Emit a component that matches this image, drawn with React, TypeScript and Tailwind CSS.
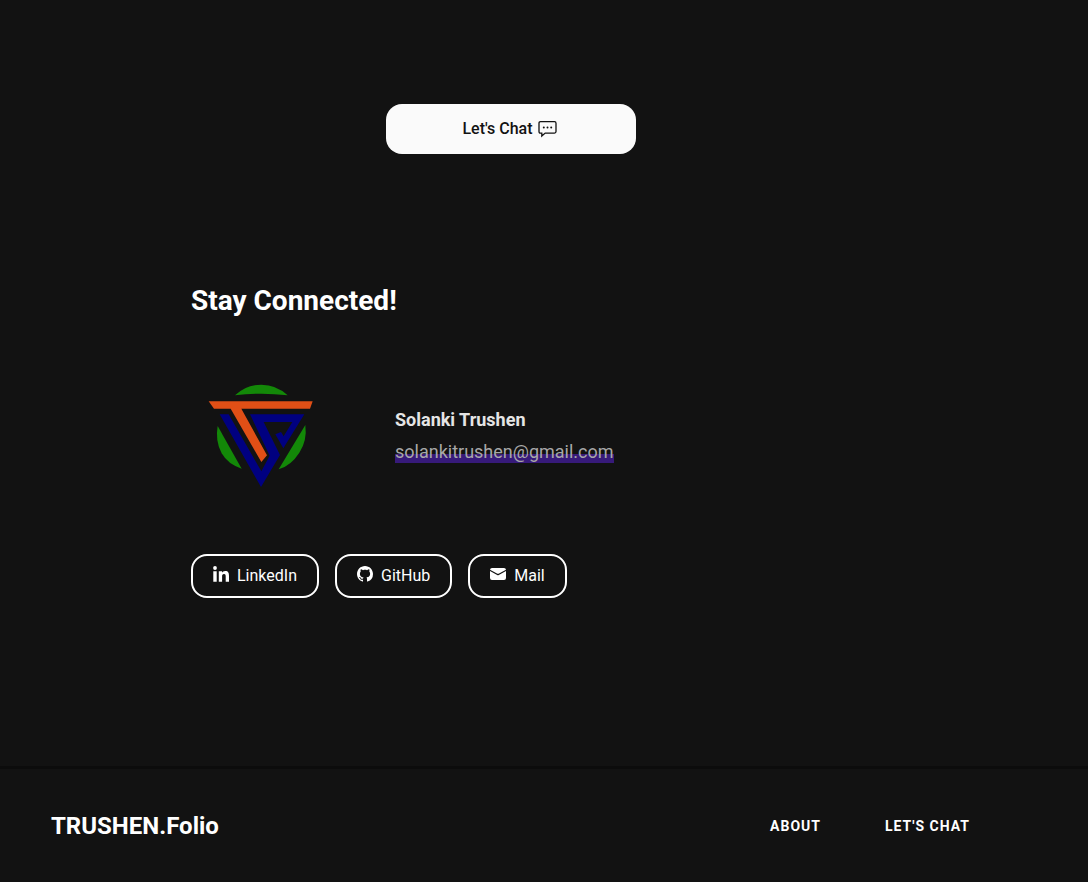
function LinkedInMark() {
  return (
    <svg viewBox="0 0 16 16" className="mb-1 size-4" fill="currentColor" aria-hidden="true">
      <circle cx="2" cy="2" r="1.9" />
      <path d="M.3 5.3H3.7V15.7H.3ZM5.8 5.3H9V6.7C9.5 5.8 10.6 5 12.2 5C15.4 5 16 7.1 16 9.9V15.7H12.7V10.5C12.7 9.2 12.6 7.9 11 7.9C9.4 7.9 9.1 9.1 9.1 10.5V15.7H5.8Z" />
    </svg>
  );
}

function GitHubMark() {
  return (
    <svg viewBox="0 0 16 16" className="mb-1 size-4" fill="currentColor" aria-hidden="true">
      <path d="M8 0C3.58 0 0 3.58 0 8c0 3.54 2.29 6.53 5.47 7.59.4.07.55-.17.55-.38 0-.19-.01-.82-.01-1.49-2.01.37-2.53-.49-2.69-.94-.09-.23-.48-.94-.82-1.13-.28-.15-.68-.52-.01-.53.63-.01 1.08.58 1.23.82.72 1.21 1.87.87 2.33.66.07-.52.28-.87.51-1.07-1.78-.2-3.64-.89-3.64-3.95 0-.87.31-1.59.82-2.15-.08-.2-.36-1.02.08-2.12 0 0 .67-.21 2.2.82.64-.18 1.32-.27 2-.27s1.36.09 2 .27c1.53-1.04 2.2-.82 2.2-.82.44 1.1.16 1.92.08 2.12.51.56.82 1.27.82 2.15 0 3.07-1.87 3.75-3.65 3.95.29.25.54.73.54 1.48 0 1.07-.01 1.93-.01 2.2 0 .21.15.46.55.38A8.01 8.01 0 0 0 16 8c0-4.42-3.58-8-8-8Z" />
    </svg>
  );
}

function MailMark() {
  return (
    <svg viewBox="0 0 16 16" className="mb-1 size-4" fill="currentColor" aria-hidden="true">
      <path d="M2 2H14Q15.8 2 16 3.7L8.6 7.7Q8 8 7.4 7.7L0 3.7Q.2 2 2 2Z" />
      <path d="M0 5L7.2 9Q8 9.4 8.8 9L16 5V12Q16 14 14 14H2Q0 14 0 12Z" />
    </svg>
  );
}

const socials = [
  { label: "LinkedIn", href: "#linkedin", Icon: LinkedInMark },
  { label: "GitHub", href: "#github", Icon: GitHubMark },
  { label: "Mail", href: "mailto:solankitrushen@gmail.com", Icon: MailMark },
];

function Logo() {
  return (
    <svg viewBox="0 0 375 360" className="h-[120px] w-[125px]" role="img" aria-label="Trushen logo">
      <g fill="#138808">
        <path d="M105 61Q138 29 184 29T263 61Q184 51 105 61Z" />
        <path d="M53 153Q45 198 65 235Q84 268 125 281Z" />
        <path d="M316 150Q322 197 298 233Q273 272 236 283Z" />
      </g>
      <path fill="#000080" d="M59 118H86L184 289L209 242L150 118H313L250 220L226 178L243 171L251 184L277 141H191L240 240L183 336Z" />
      <path fill="#e04f16" d="M26 79H338L330 101H124L201 241L184 261L92 101H42Z" />
    </svg>
  );
}

function ChatIcon() {
  return (
    <svg viewBox="0 0 20 18" className="h-[18px] w-5" fill="none" stroke="currentColor" strokeWidth="1.3" aria-hidden="true">
      <path d="M2.5 1.7H16.5Q18 1.7 18 3.2V11.6Q18 13.1 16.5 13.1H7.2L3.8 16V13.1H2.5Q1 13.1 1 11.6V3.2Q1 1.7 2.5 1.7Z" />
      <g fill="currentColor" stroke="none">
        <circle cx="5.8" cy="7.4" r="1" />
        <circle cx="9.5" cy="7.4" r="1" />
        <circle cx="13.2" cy="7.4" r="1" />
      </g>
    </svg>
  );
}

export default function App() {
  return (
    <div className="flex min-h-screen flex-col bg-[#121212] font-['Roboto',sans-serif] text-white">
      <main className="mr-[66px] grow px-6">
        <div className="mx-auto max-w-[640px] pt-[104px] pb-[168px]">
          <div className="flex justify-center">
            <button type="button" className="flex h-[50px] w-[250px] items-center justify-center gap-[5px] rounded-2xl bg-[#fafafa] pr-[2px] text-base font-medium text-[#121212]">
              Let&apos;s Chat
              <ChatIcon />
            </button>
          </div>
          <section className="pt-[129px]">
            <h2 className="text-[28px] leading-9 font-bold">Stay Connected!</h2>
            <div className="mt-14 flex items-center gap-[70px] pl-[9px]">
              <Logo />
              <div className="pt-[2px] text-lg leading-8">
                <p className="font-bold text-[#e5e5e5]">Solanki Trushen</p>
                <a href="mailto:solankitrushen@gmail.com" className="block bg-linear-to-r from-[#371a7a] to-[#371a7a] bg-[length:100%_9px] bg-[position:0_18px] bg-no-repeat text-[#a8a8a8]">
                  solankitrushen@gmail.com
                </a>
              </div>
            </div>
            <div className="mt-[59px] flex flex-wrap gap-4">
              {socials.map(({ label, href, Icon }) => (
                <a key={label} href={href} className="flex h-11 items-center gap-2 rounded-2xl border-2 border-white px-5 text-base">
                  <Icon />
                  {label}
                </a>
              ))}
            </div>
          </section>
        </div>
      </main>
      <footer className="flex items-center justify-between border-t-3 border-[#0c0c0c] pt-[41px] pb-10 pr-[118px] pl-[51px]">
        <a href="#home" className="text-2xl font-bold">TRUSHEN.Folio</a>
        <nav className="flex gap-16 text-sm font-bold tracking-[1px]">
          <a href="#about">ABOUT</a>
          <a href="#chat">LET&apos;S CHAT</a>
        </nav>
      </footer>
    </div>
  );
}
